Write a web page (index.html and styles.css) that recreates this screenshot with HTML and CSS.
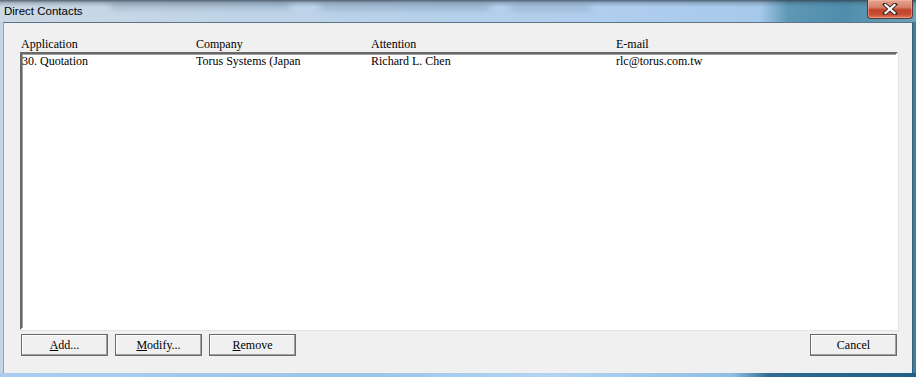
FILE: index.html
```html
<!DOCTYPE html>
<html>
<head>
<meta charset="utf-8">
<title>Direct Contacts</title>
<link rel="stylesheet" href="styles.css">
</head>
<body>
<div class="window">
  <div class="titlebar">
    <span class="smudge s1"></span>
    <span class="smudge s2"></span>
    <span class="smudge s3"></span>
    <span class="title">Direct Contacts</span>
    <button class="close" aria-label="Close">
      <svg width="16" height="12" viewBox="0 0 16 12">
        <path d="M3 1.5 L13 10.5 M13 1.5 L3 10.5" stroke="#3b2a26" stroke-width="4" stroke-linecap="square"/>
        <path d="M3.5 2 L12.5 10 M12.5 2 L3.5 10" stroke="#ffffff" stroke-width="2.2" stroke-linecap="square"/>
      </svg>
    </button>
  </div>
  <div class="client">
    <div class="header cols">
      <span>Application</span>
      <span>Company</span>
      <span>Attention</span>
      <span>E-mail</span>
    </div>
    <div class="listbox">
      <div class="row cols">
        <span>30. Quotation</span>
        <span>Torus Systems (Japan</span>
        <span>Richard L. Chen</span>
        <span>rlc@torus.com.tw</span>
      </div>
    </div>
    <div class="buttons">
      <button class="btn"><u>A</u>dd...</button>
      <button class="btn"><u>M</u>odify...</button>
      <button class="btn"><u>R</u>emove</button>
      <span class="spacer"></span>
      <button class="btn">Cancel</button>
    </div>
  </div>
</div>
</body>
</html>
```
FILE: styles.css
```css
html, body {
  margin: 0;
  padding: 0;
  background: #ffffff;
}

.window {
  width: 916px;
  height: 377px;
  box-sizing: border-box;
  display: flex;
  flex-direction: column;
  padding: 0 3px 4px 3px;
  background:
    linear-gradient(to right, #a9cdee 0, #9cc5ea 40%, #b1d4f2 60%, #8fbde4 80%, #2d6c94 84%, #1f5f88 100%) bottom / 100% 4px no-repeat,
    linear-gradient(to right, #c3d5e6 0, #bad2ea 50%, #a8cbec 80%, #4e8caa 86%, #3f7f9f 100%);
}

.titlebar {
  position: relative;
  height: 22px;
  flex: none;
  margin: 0 -3px;
  overflow: hidden;
  background:
    linear-gradient(to bottom, rgba(40, 52, 64, 0.7) 0, rgba(60, 80, 100, 0.25) 3px, rgba(255, 255, 255, 0) 7px),
    linear-gradient(to right, #ccd8e3 0, #c2d5e7 20%, #b7d1ea 45%, #aecdee 70%, #a6c9ea 83%, #5d98b5 86%, #4f8dac 92%, #6aa3bd 100%);
}

.smudge {
  position: absolute;
  top: 3px;
  height: 5px;
  border-radius: 3px;
  background: rgba(60, 80, 105, 0.3);
  filter: blur(3px);
}
.s1 { left: 110px; width: 180px; }
.s2 { left: 320px; width: 170px; top: 4px; }
.s3 { left: 510px; width: 80px; top: 5px; background: rgba(70, 90, 115, 0.25); }

.title {
  position: absolute;
  left: 4px;
  top: 4px;
  font-family: "Liberation Sans", Arial, sans-serif;
  font-size: 11.5px;
  line-height: 14px;
  color: #000000;
}

.close {
  position: absolute;
  right: 3px;
  top: 0;
  width: 46px;
  height: 19px;
  padding: 0;
  border: 1px solid #5b3a34;
  border-top: none;
  border-radius: 0 0 4px 4px;
  background: linear-gradient(to bottom, #e4a492 0, #d7826b 40%, #c0432a 55%, #c74c31 80%, #dc7a5c 100%);
  box-shadow: inset 0 0 0 1px rgba(255, 200, 180, 0.45);
  display: flex;
  align-items: center;
  justify-content: center;
}

.client {
  flex: 1;
  display: flex;
  flex-direction: column;
  background: #f0f0f0;
  border-top: 1px solid #5e7386;
  border-left: 1px solid #8fa3b6;
  border-right: 1px solid #34607c;
  padding: 14px 14px 17px 16px;
  font-family: "Liberation Serif", serif;
  font-size: 12px;
  color: #000000;
}

.cols {
  display: grid;
  grid-template-columns: 175px 175px 245px 1fr;
  white-space: nowrap;
}

.header {
  height: 15px;
  line-height: 15px;
  padding-left: 1px;
}

.listbox {
  height: 278px;
  box-sizing: border-box;
  background: #ffffff;
  border-style: solid;
  border-width: 2px;
  border-color: #696969 #ffffff #ffffff #696969;
  box-shadow: inset 1px 1px 0 #a0a0a0, 1px 1px 0 #e3e3e3;
}

.row {
  height: 14px;
  line-height: 14px;
  grid-template-columns: 174px 175px 245px 1fr;
}

.buttons {
  display: flex;
  gap: 7px;
  margin-top: 4px;
  padding-left: 1px;
  padding-right: 1px;
}

.spacer {
  flex: 1;
}

.btn {
  width: 87px;
  height: 22px;
  padding: 0;
  box-sizing: border-box;
  font-family: "Liberation Serif", serif;
  font-size: 12px;
  color: #000000;
  background: #f0f0f0;
  border: 1px solid #6a6a6a;
  box-shadow: inset -1px -1px 0 #a0a0a0, inset 1px 1px 0 #ffffff;
}

.btn u {
  text-decoration: underline;
  text-underline-offset: 1px;
}
```
